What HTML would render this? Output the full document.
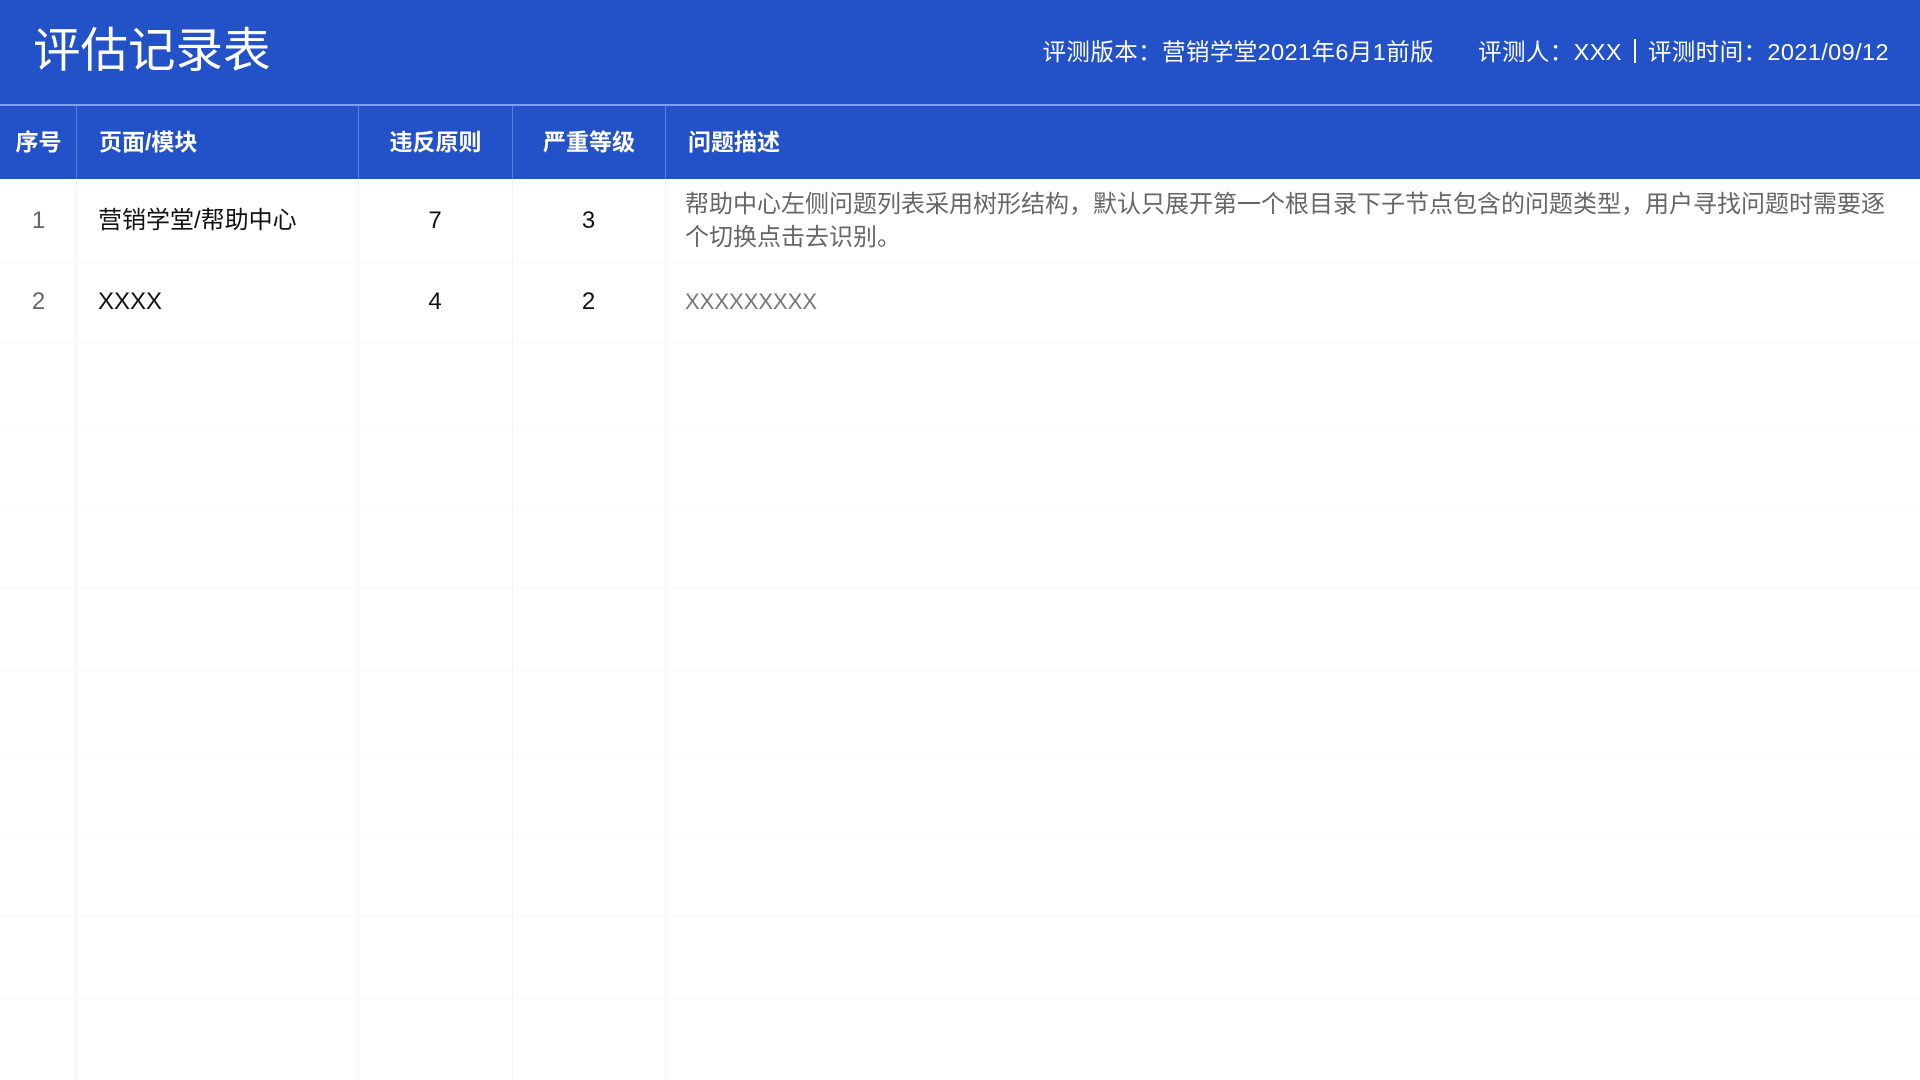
<!DOCTYPE html>
<html><head><meta charset="utf-8"><style>
*{margin:0;padding:0;box-sizing:border-box}
body{width:1920px;height:1080px;overflow:hidden;background:#fff;font-family:"Liberation Sans","Noto Sans CJK SC",sans-serif;position:relative}
.top{position:absolute;left:0;top:0;width:1920px;height:106px;background:#2352c8;border-bottom:2px solid #7f9fe6}
.title{position:absolute;left:33px;top:21px;font-size:47.5px;color:#fff;line-height:62px}
.meta{position:absolute;right:31px;top:37px;font-size:23.5px;color:#fff;line-height:30px;white-space:nowrap;letter-spacing:0.4px}
.th{position:absolute;top:106px;left:0;width:1920px;height:73px;background:#2352c8}
.th div{position:absolute;top:0;height:73px;line-height:73px;color:#fff;font-weight:bold;font-size:23px;border-left:1px solid #5a7fdb}
.c{position:absolute;font-size:24px;line-height:30px}
.vl{position:absolute;top:179px;bottom:0;width:1px;background:#f3f3f3}
.hl{position:absolute;left:0;width:1920px;height:1px;background:#f9f9f9}
</style></head><body>
<div class="top"><div class="title">评估记录表</div>
<div class="meta">评测版本：营销学堂2021年6月1前版<span style="display:inline-block;width:44px"></span>评测人：XXX<span style="display:inline-block;width:2px;height:24px;background:#fff;margin:0 12px;vertical-align:-3px"></span>评测时间：2021/09/12</div></div>
<div class="th">
<div style="left:0;width:77px;border-left:none;text-align:center">序号</div>
<div style="left:76px;width:282px;padding-left:22px">页面/模块</div>
<div style="left:358px;width:154px;text-align:center">违反原则</div>
<div style="left:512px;width:153px;text-align:center">严重等级</div>
<div style="left:665px;width:1255px;padding-left:22px">问题描述</div>
</div>
<div class="vl" style="left:76px"></div><div class="vl" style="left:358px"></div><div class="vl" style="left:512px"></div><div class="vl" style="left:665px"></div>
<div class="hl" style="top:262px"></div><div class="hl" style="top:342px"></div><div class="hl" style="top:424px"></div><div class="hl" style="top:506px"></div><div class="hl" style="top:588px"></div><div class="hl" style="top:670px"></div><div class="hl" style="top:752px"></div><div class="hl" style="top:834px"></div><div class="hl" style="top:916px"></div><div class="hl" style="top:998px"></div>
<div class="c" style="left:0;width:77px;text-align:center;top:206px;color:#666">1</div>
<div class="c" style="left:98px;top:206px;color:#111">营销学堂/帮助中心</div>
<div class="c" style="left:358px;width:154px;text-align:center;top:206px;color:#111">7</div>
<div class="c" style="left:512px;width:153px;text-align:center;top:206px;color:#111">3</div>
<div class="c" style="left:685px;width:1225px;top:188px;color:#666;font-size:24px;line-height:33px"><span style="white-space:nowrap">帮助中心左侧问题列表采用树形结构，默认只展开第一个根目录下子节点包含的问题类型，用户寻找问题时需要逐</span><br>个切换点击去识别。</div>
<div class="c" style="left:0;width:77px;text-align:center;top:287px;color:#666">2</div>
<div class="c" style="left:98px;top:287px;color:#111">XXXX</div>
<div class="c" style="left:358px;width:154px;text-align:center;top:287px;color:#111">4</div>
<div class="c" style="left:512px;width:153px;text-align:center;top:287px;color:#111">2</div>
<div class="c" style="left:685px;top:287px;color:#777;font-size:22px">XXXXXXXXX</div>
</body></html>
